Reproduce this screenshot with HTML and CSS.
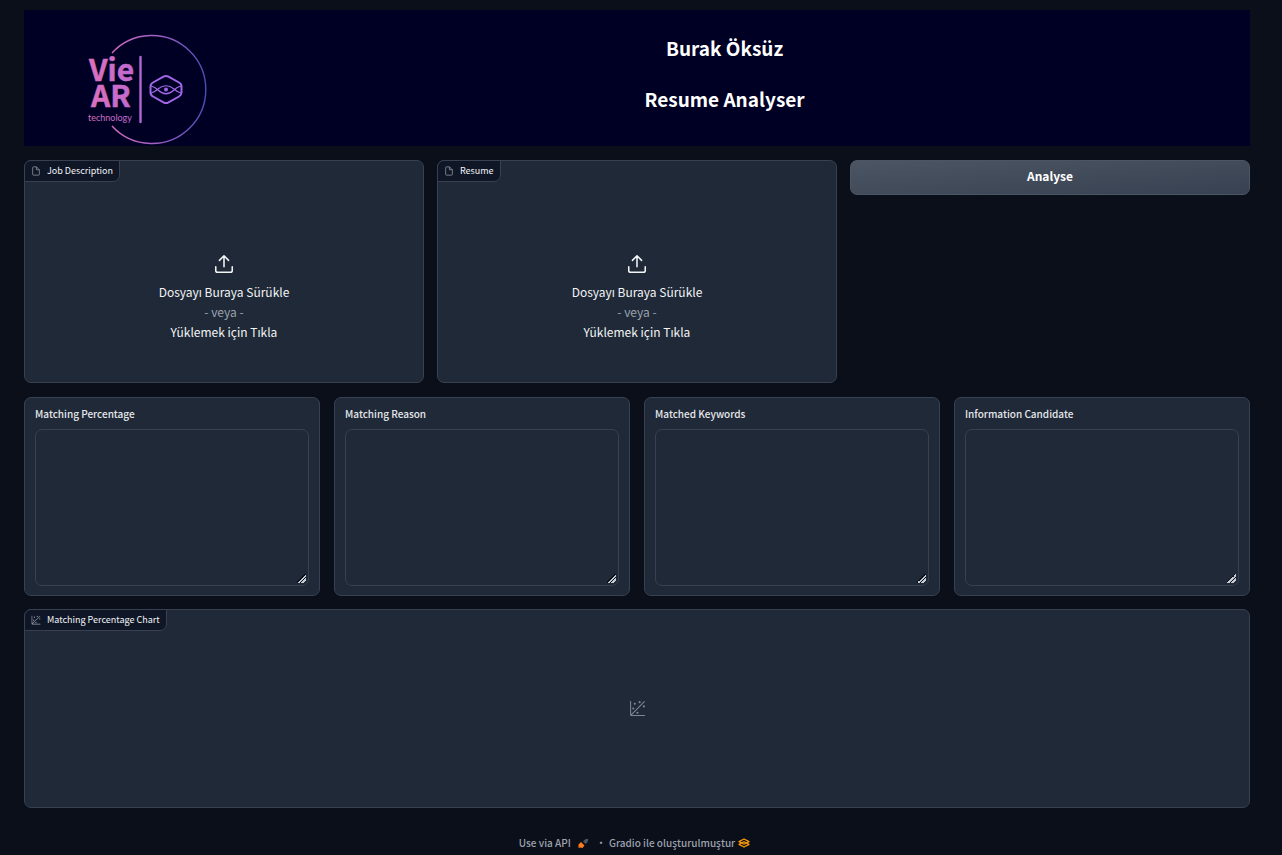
FILE: index.html
```html
<!DOCTYPE html>
<html lang="tr">
<head>
<meta charset="utf-8">
<title>Resume Analyser</title>
<link rel="stylesheet" href="styles.css">
</head>
<body>
<svg class="sprite" aria-hidden="true">
  <symbol id="icon-file" viewBox="0 0 24 24"><path d="M13 2H6a2 2 0 0 0-2 2v16a2 2 0 0 0 2 2h12a2 2 0 0 0 2-2V9zM13 2v7h7" fill="none" stroke="currentColor" stroke-width="1.7" stroke-linejoin="round"/></symbol>
  <symbol id="icon-upload" viewBox="0 0 24 24"><path d="M21 15v4a2 2 0 0 1-2 2H5a2 2 0 0 1-2-2v-4M17 8l-5-5-5 5M12 3v12" fill="none" stroke="currentColor" stroke-width="1.7" stroke-linecap="round" stroke-linejoin="round"/></symbol>
  <symbol id="icon-plot" viewBox="0 0 32 32"><g fill="currentColor"><circle cx="20" cy="4" r="2"/><circle cx="8" cy="16" r="2"/><circle cx="28" cy="12" r="2"/><circle cx="11" cy="7" r="2"/><circle cx="16" cy="24" r="2"/><path d="M30 3.4 28.6 2 4 26.6V2H2v26a2 2 0 0 0 2 2h26v-2H5.4z"/></g></symbol>
</svg>
<main class="page">
  <header class="banner">
    <svg class="logo" viewBox="24 10 184 136" role="img" aria-label="Vie AR technology">
      <defs>
        <linearGradient id="ring" gradientUnits="userSpaceOnUse" x1="100" y1="0" x2="207" y2="0"><stop offset="0" stop-color="#e070b8"/><stop offset=".5" stop-color="#a45fc4"/><stop offset="1" stop-color="#4c4cb4"/></linearGradient>
        <linearGradient id="word" gradientUnits="userSpaceOnUse" x1="86" y1="0" x2="184" y2="0"><stop offset="0" stop-color="#e070b8"/><stop offset=".55" stop-color="#b968d4"/><stop offset="1" stop-color="#9a66ec"/></linearGradient>
      </defs>
      <path d="M112 53a54 54 0 1 1 0 73" fill="none" stroke="url(#ring)" stroke-width="1.4"/>
      <g fill="url(#word)">
        <text class="logo-word" x="89" y="81">Vie</text>
        <text class="logo-word" x="91" y="107">AR</text>
        <text class="logo-small" x="88" y="121">technology</text>
      </g>
      <path d="M140.500 57V122" fill="none" stroke="#b266d2" stroke-width="2.400" stroke-linecap="round"/>
      <g fill="none" stroke="#a067e6">
        <path d="M163.500 76.600q2.500-1.400 5 0l10.500 5.900q2.500 1.400 2.500 4v6q0 2.600-2.500 4L168.500 102.400q-2.500 1.400-5 0L153 96.500q-2.500-1.400-2.500-4v-6q0-2.600 2.500-4z" stroke-width="2"/>
        <path d="M151 86q4 1 7 4 8 7.500 16 0 3-3 7-4M151 93q4-1 7-4 8-6.500 16 0 3 3 7 4" stroke-width="1.200"/>
      </g>
      <circle cx="166" cy="89.500" r="2" fill="#a067e6"/>
    </svg>
    <div class="titles">
      <h1>Burak Öksüz</h1>
      <h2>Resume Analyser</h2>
    </div>
  </header>

  <section class="row inputs">
    <div class="panel file">
      <span class="tag" id="jd"><svg><use href="#icon-file"/></svg>Job Description</span>
      <button class="drop" type="button" aria-describedby="jd">
        <svg><use href="#icon-upload"/></svg>
        <span>Dosyayı Buraya Sürükle</span><span class="or">- veya -</span><span>Yüklemek için Tıkla</span>
      </button>
    </div>
    <div class="panel file">
      <span class="tag" id="cv"><svg><use href="#icon-file"/></svg>Resume</span>
      <button class="drop" type="button" aria-describedby="cv">
        <svg><use href="#icon-upload"/></svg>
        <span>Dosyayı Buraya Sürükle</span><span class="or">- veya -</span><span>Yüklemek için Tıkla</span>
      </button>
    </div>
    <button class="analyse" type="button">Analyse</button>
  </section>

  <section class="row outputs">
    <div class="panel field"><label for="percentage">Matching Percentage</label><textarea id="percentage"></textarea></div>
    <div class="panel field"><label for="reason">Matching Reason</label><textarea id="reason"></textarea></div>
    <div class="panel field"><label for="keywords">Matched Keywords</label><textarea id="keywords"></textarea></div>
    <div class="panel field"><label for="candidate">Information Candidate</label><textarea id="candidate"></textarea></div>
  </section>

  <section class="panel chart">
    <span class="tag"><svg><use href="#icon-plot"/></svg>Matching Percentage Chart</span>
    <svg class="empty"><use href="#icon-plot"/></svg>
  </section>

  <footer class="footer">
    <a href="#api">Use via API
      <svg class="rocket" viewBox="0 0 12 12"><path d="M6 4.500 8 2.500q2-1 3-.5.500 1-.5 3l-2 2z" fill="#4b5563"/><path d="M1.500 7.500 4 5l3.500 3.500L5.500 11 3 10.500 1.500 11z" fill="#ff7a1a"/></svg>
    </a>
    <span class="dot">·</span>
    <a href="#gradio">Gradio ile oluşturulmuştur
      <svg class="gradio" viewBox="0 0 12 12"><path d="M6 2 11 4.600 6 7.200 1 4.600zM1 7.400 6 4.800l5 2.600L6 10z" fill="none" stroke="#ff9d0a" stroke-width="1.200" stroke-linejoin="round"/></svg>
    </a>
  </footer>
</main>
</body>
</html>
```
FILE: styles.css
```css
* { box-sizing: border-box; }
body {
  margin: 0;
  background: #0b0f19;
  color: #f3f4f6;
  font-family: "Noto Sans CJK SC", "Noto Sans", sans-serif;
  font-size: 12px;
  line-height: 20px;
}
button, textarea { font: inherit; color: inherit; }
.sprite { position: absolute; width: 0; height: 0; }
.page { padding: 10px 32px 0 24px; }

.banner {
  display: grid;
  grid-template-columns: minmax(0, 1fr) minmax(0, 6fr);
  height: 136px;
  margin-bottom: 14px;
  background: #000024;
}
.logo { width: 184px; height: 136px; }
.logo-word { font: 700 30px "Noto Sans CJK SC", sans-serif; stroke: url(#word); stroke-width: 0.5; }
.logo-small { font: 400 9px Lato, sans-serif; }
.titles { padding-top: 23px; text-align: center; color: #fff; }
h1, h2 { margin: 0 0 21px; font-size: 19px; line-height: 30px; font-weight: 600; }

.panel { background: #1f2937; border: 1px solid #374151; border-radius: 7px; }
.row { display: grid; }
.inputs { grid-template-columns: repeat(3, 1fr); gap: 13px; align-items: start; margin-bottom: 14px; }
.outputs { grid-template-columns: repeat(4, 1fr); gap: 14px; margin-bottom: 13px; }

.tag {
  position: absolute;
  top: -1px;
  left: -1px;
  display: flex;
  align-items: center;
  gap: 6px;
  height: 22px;
  padding: 0 6px;
  border: 1px solid #374151;
  border-radius: 7px 0 7px 0;
  background: #0f1626;
  font-size: 9px;
  line-height: 20px;
}
.tag svg { width: 10px; height: 10px; color: #9ca3af; }

.file { position: relative; height: 223px; }
.drop {
  display: flex;
  flex-direction: column;
  align-items: center;
  justify-content: center;
  width: 100%;
  height: 100%;
  padding: 67px 0 16px;
  border: 0;
  background: none;
}
.drop svg { width: 22px; height: 22px; margin-bottom: 7px; }
.drop .or { color: #9ca3af; }

.analyse {
  height: 35px;
  padding: 0 0 3px;
  border: 1px solid #4b5563;
  border-radius: 7px;
  background: linear-gradient(to bottom right, #4b5563, #374151);
  color: #fff;
  font-weight: 600;
  line-height: 20px;
}

.field { display: flex; flex-direction: column; height: 199px; padding: 6px 10px 9px; }
.field label { margin-bottom: 5px; font-size: 10px; line-height: 20px; font-weight: 500; color: #e5e7eb; }
.field textarea {
  flex: 1;
  width: 100%;
  padding: 9px;
  border: 1px solid #374151;
  border-radius: 7px;
  background: #1f2937;
  resize: vertical;
}
.field textarea::-webkit-resizer {
  background: linear-gradient(135deg, transparent 40%, #0b0f19 40% 50%, #c5cad1 50% 62%, #0b0f19 62% 72%, #c5cad1 72% 84%, transparent 84%) 4px 4px / 9px 9px no-repeat;
}

.chart { position: relative; display: grid; place-items: center; height: 199px; }
.empty { width: 17px; height: 17px; color: #7d8694; }

.footer { display: flex; justify-content: center; margin: 25px 5px 0 0; font-size: 10px; font-weight: 500; color: #9ca3af; }
.footer a { display: flex; align-items: center; color: inherit; text-decoration: none; }
.footer svg { width: 12px; height: 12px; }
.rocket { margin-left: 6px; }
.gradio { margin-left: 3px; }
.dot { margin: 0 3px 0 7px; }
```
